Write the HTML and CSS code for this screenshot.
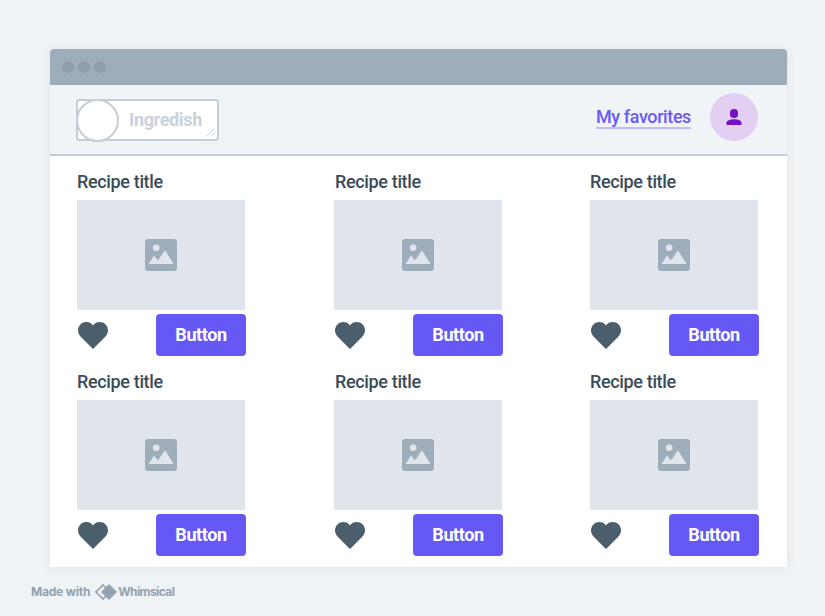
FILE: index.html
```html
<!DOCTYPE html>
<html lang="en">
<head>
<meta charset="utf-8">
<title>Ingredish</title>
<link rel="stylesheet" href="styles.css">
</head>
<body>
<svg class="symbols" aria-hidden="true">
  <symbol id="picture" viewBox="0 0 32 32">
    <path fill="#9eadba" fill-rule="evenodd" d="M3 0H29Q32 0 32 3V29Q32 32 29 32H3Q0 32 0 29V3Q0 0 3 0ZM11.2 5.5a3.3 3.3 0 1 0 0 6.6a3.3 3.3 0 1 0 0-6.6ZM3.5 25H28.7L20 11.3L13 21.3L9 16.5Z"/>
  </symbol>
  <symbol id="heart" viewBox="0 0 30 27">
    <path fill="#4b5e6c" d="M15 27L2.5 14.4C-.8 11-.8 5.7 2.4 2.4C5.8-.8 11.3-.8 14.3 2.5L15 3.4L15.7 2.5C18.7-.8 24.2-.8 27.6 2.4C30.8 5.7 30.8 11 27.5 14.4Z"/>
  </symbol>
</svg>
<div class="window">
  <div class="titlebar"><i></i><i></i><i></i></div>
  <header class="header">
    <div class="brand">
      <span class="brand-mark"></span>
      <span class="brand-name">Ingredish</span>
      <svg class="grip" width="9" height="9" viewBox="0 0 9 9"><path d="M.5 8.5L8.5 .5M4.5 8.5L8.5 4.5" stroke="#c3ced9" fill="none"/></svg>
    </div>
    <a class="favorites">My favorites</a>
    <div class="avatar">
      <svg width="16" height="16" viewBox="0 0 16 16" fill="#7610c4"><rect x="4" y="0" width="8" height="9" rx="3.8"/><path d="M.5 16V14C.5 11.6 4 10.3 8 10.3S15.5 11.6 15.5 14V16Z"/></svg>
    </div>
  </header>
  <main class="recipes">
    <article class="card"><h2>Recipe title</h2><div class="photo"><svg><use href="#picture"/></svg></div><div class="actions"><svg class="heart"><use href="#heart"/></svg><button>Button</button></div></article>
    <article class="card middle"><h2>Recipe title</h2><div class="photo"><svg><use href="#picture"/></svg></div><div class="actions"><svg class="heart"><use href="#heart"/></svg><button>Button</button></div></article>
    <article class="card"><h2>Recipe title</h2><div class="photo"><svg><use href="#picture"/></svg></div><div class="actions"><svg class="heart"><use href="#heart"/></svg><button>Button</button></div></article>
    <article class="card"><h2>Recipe title</h2><div class="photo"><svg><use href="#picture"/></svg></div><div class="actions"><svg class="heart"><use href="#heart"/></svg><button>Button</button></div></article>
    <article class="card middle"><h2>Recipe title</h2><div class="photo"><svg><use href="#picture"/></svg></div><div class="actions"><svg class="heart"><use href="#heart"/></svg><button>Button</button></div></article>
    <article class="card"><h2>Recipe title</h2><div class="photo"><svg><use href="#picture"/></svg></div><div class="actions"><svg class="heart"><use href="#heart"/></svg><button>Button</button></div></article>
  </main>
</div>
<footer class="credit">
  <span class="made">Made with</span>
  <svg width="22" height="16" viewBox="0 0 22 16"><path d="M8 1L1 8L8 15L15 8Z" fill="none" stroke="#93a1ae" stroke-width="1.6"/><path d="M14 0L22 8L14 16L6 8Z" fill="#93a1ae"/></svg>
  <span class="name">Whimsical</span>
</footer>
</body>
</html>
```
FILE: styles.css
```css
* { box-sizing: border-box; }
body {
  margin: 0;
  padding: 49px 38px 0 50px;
  height: 616px;
  overflow: hidden;
  background: #eff3f6;
  font-family: Roboto, "Liberation Sans", sans-serif;
  color: #3a4b58;
}
.symbols { position: absolute; width: 0; height: 0; }
.window {
  height: 518px;
  background: #fff;
  border-radius: 4px 4px 0 0;
  box-shadow: 0 2px 10px rgba(60, 80, 100, .08);
}
.titlebar {
  display: flex;
  align-items: center;
  gap: 4px;
  height: 36px;
  padding-left: 12px;
  background: #9eadba;
  border-radius: 4px 4px 0 0;
}
.titlebar i { width: 12px; height: 12px; border-radius: 50%; background: #8f9eac; }
.header {
  display: flex;
  align-items: flex-start;
  height: 71px;
  padding: 8px 29px 0 26px;
  background: #f0f4f7;
  border-bottom: 2px solid #c3ced9;
}
.brand {
  position: relative;
  display: flex;
  width: 143px;
  height: 42px;
  margin-top: 6px;
  background: #fff;
  border: 2px solid #c3ced9;
  border-radius: 4px;
}
.brand-mark {
  flex: none;
  width: 43px;
  height: 43px;
  margin: -2px 0 0 -2px;
  border: 2px solid #c3ced9;
  border-radius: 50%;
  background: #fff;
}
.brand-name {
  margin-left: 10px;
  font-size: 18px;
  line-height: 38px;
  font-weight: 700;
  letter-spacing: -.35px;
  color: #c8d2dd;
}
.grip { position: absolute; right: 2px; bottom: 2px; }
.favorites {
  height: 21px;
  margin: 15px 19px 0 auto;
  font-size: 18px;
  line-height: 18px;
  font-weight: 500;
  letter-spacing: -.4px;
  color: #6a5af5;
  border-bottom: 2px solid #c4bcfa;
}
.avatar {
  display: flex;
  align-items: center;
  justify-content: center;
  width: 48px;
  height: 48px;
  border-radius: 50%;
  background: #e2cff2;
}
.recipes {
  display: grid;
  grid-template-columns: 257px 256px 170px;
  grid-auto-rows: 200px;
  padding-left: 27px;
}
.card h2 {
  margin: 0;
  height: 44px;
  font-size: 18px;
  line-height: 52px;
  font-weight: 500;
  letter-spacing: -.35px;
  white-space: nowrap;
}
.middle h2 { padding-left: 1px; }
.photo {
  display: flex;
  align-items: center;
  justify-content: center;
  width: 168px;
  height: 110px;
  background: #e0e5ec;
}
.photo svg { width: 32px; height: 32px; }
.actions {
  display: flex;
  justify-content: space-between;
  width: 169px;
  padding: 4px 0 0 1px;
}
.heart { width: 30px; height: 27px; margin-top: 8px; }
button {
  width: 90px;
  height: 42px;
  padding: 0;
  border: 0;
  border-radius: 4px;
  background: #6558f5;
  color: #fff;
  font: 700 18px/42px Roboto, "Liberation Sans", sans-serif;
  letter-spacing: -.4px;
}
.credit {
  display: flex;
  align-items: center;
  height: 16px;
  margin: 17px 0 0 -19px;
  font-family: Inter, sans-serif;
  font-size: 12px;
  line-height: 16px;
  font-weight: 700;
  color: #93a1ae;
}
.credit svg { margin: 0 1px 0 5px; }
.made { letter-spacing: -.2px; }
.name { letter-spacing: -.6px; }
```
